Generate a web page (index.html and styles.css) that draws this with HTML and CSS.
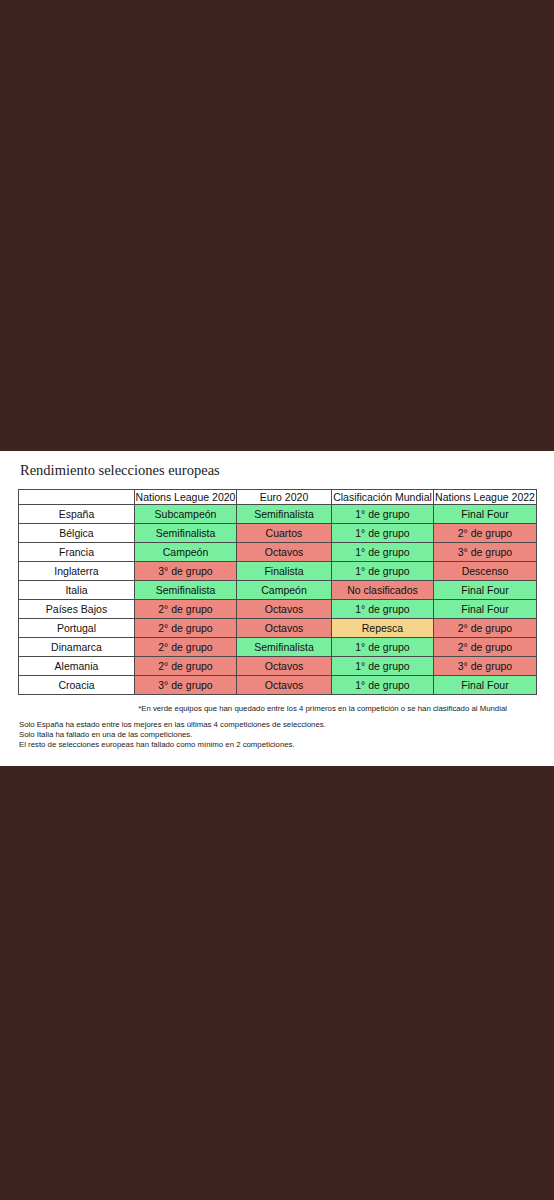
FILE: index.html
```html
<!DOCTYPE html>
<html>
<head>
  <title>Rendimiento selecciones europeas</title>
  <link rel="stylesheet" href="styles.css">
</head>
<body>
  <div class="panel">
    <h1 class="title">Rendimiento selecciones europeas</h1>

    <table class="results">
      <colgroup>
        <col class="c-team">
        <col class="c-a">
        <col class="c-b">
        <col class="c-c">
        <col class="c-d">
      </colgroup>
      <tr class="head">
        <th></th>
        <th>Nations League 2020</th>
        <th>Euro 2020</th>
        <th>Clasificación Mundial</th>
        <th>Nations League 2022</th>
      </tr>
      <tr>
        <td>España</td>
        <td class="ok">Subcampeón</td>
        <td class="ok">Semifinalista</td>
        <td class="ok">1° de grupo</td>
        <td class="ok">Final Four</td>
      </tr>
      <tr>
        <td>Bélgica</td>
        <td class="ok">Semifinalista</td>
        <td class="bad">Cuartos</td>
        <td class="ok">1° de grupo</td>
        <td class="bad">2° de grupo</td>
      </tr>
      <tr>
        <td>Francia</td>
        <td class="ok">Campeón</td>
        <td class="bad">Octavos</td>
        <td class="ok">1° de grupo</td>
        <td class="bad">3° de grupo</td>
      </tr>
      <tr>
        <td>Inglaterra</td>
        <td class="bad">3° de grupo</td>
        <td class="ok">Finalista</td>
        <td class="ok">1° de grupo</td>
        <td class="bad">Descenso</td>
      </tr>
      <tr>
        <td>Italia</td>
        <td class="ok">Semifinalista</td>
        <td class="ok">Campeón</td>
        <td class="bad">No clasificados</td>
        <td class="ok">Final Four</td>
      </tr>
      <tr>
        <td>Países Bajos</td>
        <td class="bad">2° de grupo</td>
        <td class="bad">Octavos</td>
        <td class="ok">1° de grupo</td>
        <td class="ok">Final Four</td>
      </tr>
      <tr>
        <td>Portugal</td>
        <td class="bad">2° de grupo</td>
        <td class="bad">Octavos</td>
        <td class="mid">Repesca</td>
        <td class="bad">2° de grupo</td>
      </tr>
      <tr>
        <td>Dinamarca</td>
        <td class="bad">2° de grupo</td>
        <td class="ok">Semifinalista</td>
        <td class="ok">1° de grupo</td>
        <td class="bad">2° de grupo</td>
      </tr>
      <tr>
        <td>Alemania</td>
        <td class="bad">2° de grupo</td>
        <td class="bad">Octavos</td>
        <td class="ok">1° de grupo</td>
        <td class="bad">3° de grupo</td>
      </tr>
      <tr>
        <td>Croacia</td>
        <td class="bad">3° de grupo</td>
        <td class="bad">Octavos</td>
        <td class="ok">1° de grupo</td>
        <td class="ok">Final Four</td>
      </tr>
    </table>

    <p class="footnote">*En verde equipos que han quedado entre los 4 primeros en la competición o se han clasificado al Mundial</p>

    <div class="notes">
      <p>Solo España ha estado entre los mejores en las últimas 4 competiciones de selecciones.</p>
      <p>Solo Italia ha fallado en una de las competiciones.</p>
      <p>El resto de selecciones europeas han fallado como mínimo en 2 competiciones.</p>
    </div>
  </div>
</body>
</html>
```

FILE: styles.css
```css
body {
  margin: 0;
  background-color: #3d2420;
  font-family: "Liberation Sans", Arial, sans-serif;
}

.panel {
  margin-top: 451px;
  height: 315px;
  background-color: #fff;
  box-sizing: border-box;
  padding: 9px 0 0 18px;
  color: #111;
}

.title {
  margin: 0 0 0 2px;
  font-family: "Liberation Serif", "Times New Roman", serif;
  font-weight: normal;
  font-size: 14.5px;
  line-height: 20px;
  color: #222;
}

.results {
  margin-top: 9px;
  border-collapse: collapse;
  table-layout: fixed;
  width: 518px;
  font-size: 10.5px;
}

.c-team { width: 116px; }
.c-a { width: 102px; }
.c-b { width: 95px; }
.c-c { width: 102px; }
.c-d { width: 103px; }

.results th,
.results td {
  border: 1px solid #4a4a4a;
  padding: 0;
  text-align: center;
  white-space: nowrap;
  overflow: hidden;
  color: #111;
}

.results th {
  font-weight: normal;
  height: 14px;
  line-height: 14px;
}

.results td {
  height: 18px;
  line-height: 18px;
}

.results .ok {
  background-color: #78ef9e;
}

.results .bad {
  background-color: #ec8880;
}

.results .mid {
  background-color: #f6d48a;
}

.footnote {
  margin: 9px 0 0;
  width: 489px;
  text-align: right;
  font-size: 7.8px;
  line-height: 10px;
  color: #222;
}

.notes {
  margin-top: 6px;
  font-size: 7.8px;
  line-height: 10px;
  color: #222;
}

.notes p {
  margin: 0 0 0 1px;
}
```
